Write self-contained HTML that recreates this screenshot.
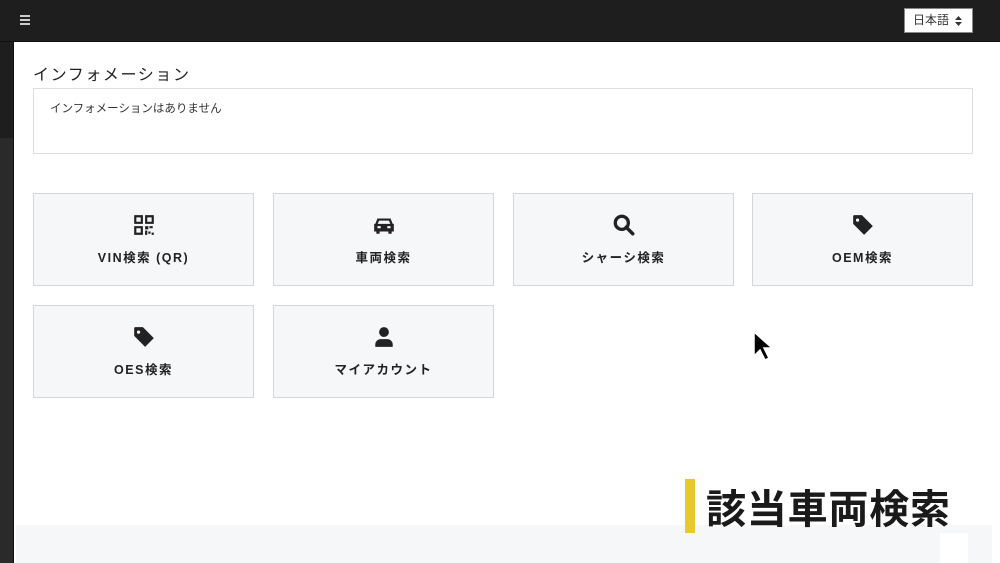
<!DOCTYPE html>
<html><head><meta charset="utf-8"><style>
*{margin:0;padding:0;box-sizing:border-box}
body{width:1000px;height:563px;overflow:hidden;position:relative;background:#fff;font-family:"Liberation Sans","Noto Sans CJK JP",sans-serif;color:#222}
.hdr{position:absolute;left:0;top:0;width:1000px;height:42px;background:#1e1e1e;border-bottom:1px solid #111}
.side{position:absolute;left:0;top:42px;width:14px;height:521px;background:#2a2a2a;border-right:1px solid #111}
.side:before{content:"";position:absolute;left:0;top:0;width:13px;height:96px;background:#1e1e1e}
.hb{position:absolute;left:20px;top:15px;width:10px}
.hb i{display:block;height:1.5px;background:#ccc;margin-bottom:2.5px}
.sel{position:absolute;left:904px;top:8px;width:69px;height:25px;background:#fff;border:1px solid #888;font-size:12px;line-height:23px;padding-left:8px;color:#333}
.sel svg{position:absolute;right:10px;top:7px}
.title{position:absolute;left:33px;top:61px;font-size:16px;color:#222;letter-spacing:1.6px}
.info{position:absolute;left:33px;top:88px;width:940px;height:66px;border:1px solid #ddd;font-size:11.5px;padding:11px 16px;color:#333}
.card{position:absolute;width:221px;height:93px;background:#f6f7f9;border:1px solid #d4d6da;text-align:center}
.card svg{position:absolute;left:98px;top:19px}
.card b{position:absolute;left:0;right:0;top:53px;font-size:12.5px;letter-spacing:1.5px;color:#222}
.bot{position:absolute;left:16px;top:525px;width:976px;height:38px;background:#f6f7f9}
.wb{position:absolute;left:940px;top:533px;width:28px;height:30px;background:#fff}
.bar{position:absolute;left:685px;top:479px;width:10px;height:54px;background:#e8c82a}
.big{position:absolute;left:706px;top:481px;font-size:40px;font-weight:bold;color:#1a1a1a;letter-spacing:0.8px;line-height:50px;font-family:"Noto Sans CJK JP",sans-serif}
</style></head><body>
<div class="hdr"><div class="hb"><i></i><i></i><i></i></div><div class="sel">日本語<svg width="7" height="10" viewBox="0 0 7 10"><path d="M0 4L3.5 0 7 4zM0 6h7L3.5 10z" fill="#333"/></svg></div></div>
<div class="side"></div>
<div class="title">インフォメーション</div>
<div class="info">インフォメーションはありません</div>

<div class="card" style="left:33px;top:193px"><svg width="24" height="24" viewBox="0 0 22 22"><path fill="#222" d="M2 2h8v8H2zM4 4v4h4V4zM12 2h8v8h-8zM14 4v4h4V4zM2 12h8v8H2zM4 14v4h4v-4zM12 12h3v3h-3zM16 12h3v2h-3zM12 16h2v4h-2zM15 17h2v2h-2zM18 18h2v2h-2z"/></svg><b>VIN検索 (QR)</b></div>
<div class="card" style="left:273px;top:193px"><svg width="24" height="24" viewBox="0 0 22 22"><path fill="#222" d="M5 5h12l2 5h1v7h-2v2h-3v-2H7v2H4v-2H2v-7h1zM6.5 7l-1.3 3h11.6l-1.3-3zM5 12v2h3v-2zM14 12v2h3v-2z"/></svg><b>車両検索</b></div>
<div class="card" style="left:513px;top:193px"><svg width="24" height="24" viewBox="0 0 22 22"><circle cx="9" cy="9" r="6" fill="none" stroke="#222" stroke-width="3"/><path d="M13 13l6 6" stroke="#222" stroke-width="3.2" stroke-linecap="round"/></svg><b>シャーシ検索</b></div>
<div class="card" style="left:752px;top:193px"><svg width="24" height="24" viewBox="0 0 22 22"><path fill="#222" d="M2 3a1 1 0 011-1h7l10 10-8 8L2 10zM6 5a1.5 1.5 0 100 3 1.5 1.5 0 000-3z" fill-rule="evenodd"/></svg><b>OEM検索</b></div>
<div class="card" style="left:33px;top:305px"><svg width="24" height="24" viewBox="0 0 22 22"><path fill="#222" d="M2 3a1 1 0 011-1h7l10 10-8 8L2 10zM6 5a1.5 1.5 0 100 3 1.5 1.5 0 000-3z" fill-rule="evenodd"/></svg><b>OES検索</b></div>
<div class="card" style="left:273px;top:305px"><svg width="24" height="24" viewBox="0 0 22 22"><circle cx="11" cy="6.5" r="4.5" fill="#222"/><path fill="#222" d="M3 20v-2a5 5 0 015-5h6a5 5 0 015 5v2z"/></svg><b>マイアカウント</b></div>

<svg style="position:absolute;left:752px;top:330px" width="26" height="36" viewBox="0 0 26 36"><path d="M2 2v24l6-6 5 10 4-2-5-10h8z" fill="#000" stroke="#fff" stroke-width="1.5"/></svg>

<div class="bot"></div><div class="wb"></div>
<div class="bar"></div>
<div class="big">該当車両検索</div>
</body></html>
